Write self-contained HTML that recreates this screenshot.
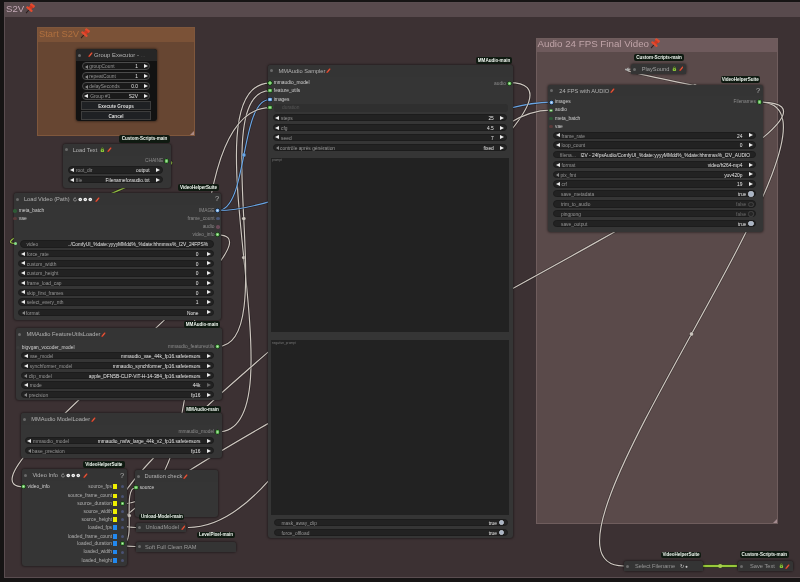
<!DOCTYPE html><html><head><meta charset="utf-8"><style>
*{margin:0;padding:0;box-sizing:border-box}
html,body{-webkit-font-smoothing:antialiased;width:800px;height:582px;overflow:hidden;background:#161414;font-family:"Liberation Sans", sans-serif;}
.a,.grp,.gt,.node,.tdot,.ttl,.badge,.wdg,.sdot{position:absolute}
.t{white-space:nowrap}
.ghdr{width:100%}
.gt{white-space:nowrap}
.ic{display:inline-block;vertical-align:middle;position:relative;top:-0.4px}
.node{border-radius:3px;box-shadow:0 0 2px 1px rgba(0,0,0,.35)}
.ntitle{border-radius:3px 3px 0 0}
.tdot{width:3px;height:3px;border-radius:50%;background:#6a6a6a}
.ttl{white-space:nowrap}
.badge{background:#0f1a11;color:#eef5ee;font-weight:bold;text-align:center;border-radius:2px;white-space:nowrap;letter-spacing:-0.05px}
.wdg{background:#222;border:0.8px solid #1c1c1c;border-radius:4px;font-size:4.85px;color:#969696;white-space:nowrap}
.wdg span{position:absolute;top:0}
.wdg i{position:absolute;width:0;height:0}
.tl{left:1.6px;border-top:2.6px solid transparent;border-bottom:2.6px solid transparent;border-right:4.3px solid #ececec}
.tl.d{left:2.3px;border-top-width:2px;border-bottom-width:2px;border-right:3.2px solid #8a8a8a}
.tr{right:1.8px;border-top:2.6px solid transparent;border-bottom:2.6px solid transparent;border-left:4.3px solid #ececec}
.wv{color:#e6e6e6}
.mk{right:7.5px;width:3px;height:3.2px;background:#3a3a3a;border-radius:0.8px}
.wv.off{color:#6a6a6a}
.tg{right:1.3px;width:5.4px;height:5.4px;border-radius:50%;background:#262626;border:0.6px solid #444}
.tg.on{background:#a9b4c4;border-color:#bcc4d0}
.sdot{border-radius:50%}
.ta{position:absolute;background:#222}
.btn{position:absolute;background:#1f2124;border:0.7px solid #3d3d3d;color:#ddd;font-size:4.65px;text-align:center;font-weight:bold}
</style></head><body><div id="root" style="position:absolute;left:0;top:0;width:800px;height:582px;overflow:hidden;will-change:transform"><div class="grp" style="left:4px;top:2px;width:830px;height:576px;background:#3c3133;border:1px solid #5a4d50;"><div class="ghdr" style="height:14px;background:#584a4d;"></div></div>
<svg class="a" style="left:829px;top:573px" width="4" height="4"><path d="M4 0 L4 4 L0 4 Z" fill="rgba(255,220,230,0.45)"/></svg>
<div class="gt" style="left:6px;top:2px;height:14px;line-height:13px;font-size:9.6px;color:#c4a9b6;">S2V<svg class="ic" style="margin-left:0.3px;width:11.5px;height:11.5px;top:-0.6px" viewBox="0 0 12 12"><g transform="rotate(40 6 6)"><line x1="6" y1="7" x2="6" y2="12" stroke="#2a1c1c" stroke-width="1"/><rect x="3.3" y="0.2" width="5.4" height="2.8" rx="0.9" fill="#e24a2e"/><rect x="4.1" y="2.4" width="3.8" height="3.8" fill="#cc3822"/><rect x="2.1" y="5.4" width="7.8" height="2.2" rx="0.7" fill="#e24a2e"/></g></svg></div>
<div class="grp" style="left:37px;top:27px;width:158px;height:109px;background:#674632;border:1px solid #7f573c;"><div class="ghdr" style="height:14px;background:#7b5237;"></div></div>
<svg class="a" style="left:190px;top:131px" width="4" height="4"><path d="M4 0 L4 4 L0 4 Z" fill="rgba(255,220,230,0.45)"/></svg>
<div class="gt" style="left:39px;top:27px;height:14px;line-height:13px;font-size:9.4px;color:#b0703f;">Start S2V<svg class="ic" style="margin-left:0.3px;width:11.5px;height:11.5px;top:-0.6px" viewBox="0 0 12 12"><g transform="rotate(40 6 6)"><line x1="6" y1="7" x2="6" y2="12" stroke="#2a1c1c" stroke-width="1"/><rect x="3.3" y="0.2" width="5.4" height="2.8" rx="0.9" fill="#e24a2e"/><rect x="4.1" y="2.4" width="3.8" height="3.8" fill="#cc3822"/><rect x="2.1" y="5.4" width="7.8" height="2.2" rx="0.7" fill="#e24a2e"/></g></svg></div>
<div class="grp" style="left:536px;top:37.5px;width:242px;height:486px;background:#5a4a4a;border:1px solid #6f5d5d;"><div class="ghdr" style="height:13.5px;background:#6e5a5c;"></div></div>
<svg class="a" style="left:773px;top:518.5px" width="4" height="4"><path d="M4 0 L4 4 L0 4 Z" fill="rgba(255,220,230,0.45)"/></svg>
<div class="gt" style="left:537.5px;top:37.5px;height:13.5px;line-height:12.5px;font-size:9.75px;color:#c0a4a8;">Audio 24 FPS Final Video<svg class="ic" style="margin-left:0.3px;width:11.5px;height:11.5px;top:-0.6px" viewBox="0 0 12 12"><g transform="rotate(40 6 6)"><line x1="6" y1="7" x2="6" y2="12" stroke="#2a1c1c" stroke-width="1"/><rect x="3.3" y="0.2" width="5.4" height="2.8" rx="0.9" fill="#e24a2e"/><rect x="4.1" y="2.4" width="3.8" height="3.8" fill="#cc3822"/><rect x="2.1" y="5.4" width="7.8" height="2.2" rx="0.7" fill="#e24a2e"/></g></svg></div>
<svg class="a" style="left:0;top:0" width="800" height="582">
<path d="M217.5 432.0 C305.7 432.0 181.8 83.1 270.0 83.1" stroke="rgba(0,0,0,0.35)" stroke-width="2.4" fill="none"/>
<path d="M217.5 432.0 C305.7 432.0 181.8 83.1 270.0 83.1" stroke="#cdc6bf" stroke-width="1.2" fill="none"/>
<circle cx="243.8" cy="257.6" r="1.9" fill="#cdc6bf" stroke="rgba(0,0,0,0.3)" stroke-width="0.5"/>
<path d="M217.5 346.5 C282.8 346.5 204.7 90.6 270.0 90.6" stroke="rgba(0,0,0,0.35)" stroke-width="2.4" fill="none"/>
<path d="M217.5 346.5 C282.8 346.5 204.7 90.6 270.0 90.6" stroke="#cdc6bf" stroke-width="1.2" fill="none"/>
<circle cx="243.8" cy="218.6" r="1.9" fill="#cdc6bf" stroke="rgba(0,0,0,0.3)" stroke-width="0.5"/>
<path d="M217.8 210.5 C248.5 210.5 239.3 99.5 270.0 99.5" stroke="rgba(0,0,0,0.35)" stroke-width="2.4" fill="none"/>
<path d="M217.8 210.5 C248.5 210.5 239.3 99.5 270.0 99.5" stroke="#6aa6e6" stroke-width="1.2" fill="none"/>
<circle cx="243.9" cy="155.0" r="1.9" fill="#6aa6e6" stroke="rgba(0,0,0,0.3)" stroke-width="0.5"/>
<path d="M217.8 210.5 C305.4 210.5 463.6 102.2 551.2 102.2" stroke="rgba(0,0,0,0.35)" stroke-width="2.4" fill="none"/>
<path d="M217.8 210.5 C305.4 210.5 463.6 102.2 551.2 102.2" stroke="#6aa6e6" stroke-width="1.2" fill="none"/>
<circle cx="384.5" cy="156.3" r="1.9" fill="#6aa6e6" stroke="rgba(0,0,0,0.3)" stroke-width="0.5"/>
<path d="M122.5 503.8 C228.2 503.8 164.3 107.7 270.0 107.7" stroke="rgba(0,0,0,0.35)" stroke-width="2.4" fill="none"/>
<path d="M122.5 503.8 C228.2 503.8 164.3 107.7 270.0 107.7" stroke="#cdc6bf" stroke-width="1.2" fill="none"/>
<circle cx="196.2" cy="305.8" r="1.9" fill="#cdc6bf" stroke="rgba(0,0,0,0.3)" stroke-width="0.5"/>
<path d="M509.1 82.7 C654.2 82.7 -9.1 527.5 136.0 527.5" stroke="rgba(0,0,0,0.35)" stroke-width="2.4" fill="none"/>
<path d="M509.1 82.7 C654.2 82.7 -9.1 527.5 136.0 527.5" stroke="#cdc6bf" stroke-width="1.2" fill="none"/>
<circle cx="322.6" cy="305.1" r="1.9" fill="#cdc6bf" stroke="rgba(0,0,0,0.3)" stroke-width="0.5"/>
<path d="M188.0 527.5 C326.3 527.5 412.6 110.2 550.9 110.2" stroke="rgba(0,0,0,0.35)" stroke-width="2.4" fill="none"/>
<path d="M188.0 527.5 C326.3 527.5 412.6 110.2 550.9 110.2" stroke="#cdc6bf" stroke-width="1.2" fill="none"/>
<circle cx="369.4" cy="318.9" r="1.9" fill="#cdc6bf" stroke="rgba(0,0,0,0.3)" stroke-width="0.5"/>
<path d="M759.2 102.0 C880.0 102.0 502.9 566.0 623.8 566.0" stroke="rgba(0,0,0,0.35)" stroke-width="2.4" fill="none"/>
<path d="M759.2 102.0 C880.0 102.0 502.9 566.0 623.8 566.0" stroke="#cdc6bf" stroke-width="1.2" fill="none"/>
<circle cx="691.5" cy="334.0" r="1.9" fill="#cdc6bf" stroke="rgba(0,0,0,0.3)" stroke-width="0.5"/>
<path d="M759.2 102.0 C792.4 102.0 597.4 69.2 630.6 69.2" stroke="rgba(0,0,0,0.35)" stroke-width="2.4" fill="none"/>
<path d="M759.2 102.0 C792.4 102.0 597.4 69.2 630.6 69.2" stroke="#cdc6bf" stroke-width="1.2" fill="none"/>
<circle cx="694.9" cy="85.6" r="1.9" fill="#cdc6bf" stroke="rgba(0,0,0,0.3)" stroke-width="0.5"/>
<path d="M759.2 102.0 C950.7 102.0 -56.0 546.5 135.5 546.5" stroke="rgba(0,0,0,0.35)" stroke-width="2.4" fill="none"/>
<path d="M759.2 102.0 C950.7 102.0 -56.0 546.5 135.5 546.5" stroke="#cdc6bf" stroke-width="1.2" fill="none"/>
<circle cx="447.4" cy="324.2" r="1.9" fill="#cdc6bf" stroke="rgba(0,0,0,0.3)" stroke-width="0.5"/>
<path d="M217.8 234.8 C297.3 234.8 -55.7 486.8 23.8 486.8" stroke="rgba(0,0,0,0.35)" stroke-width="2.4" fill="none"/>
<path d="M217.8 234.8 C297.3 234.8 -55.7 486.8 23.8 486.8" stroke="#cdc6bf" stroke-width="1.2" fill="none"/>
<circle cx="120.8" cy="360.8" r="1.9" fill="#cdc6bf" stroke="rgba(0,0,0,0.3)" stroke-width="0.5"/>
<path d="M166.5 161.0 C209.5 161.0 -27.3 243.6 15.7 243.6" stroke="rgba(0,0,0,0.35)" stroke-width="2.4" fill="none"/>
<path d="M166.5 161.0 C209.5 161.0 -27.3 243.6 15.7 243.6" stroke="#9ccc48" stroke-width="1.2" fill="none"/>
<circle cx="91.1" cy="202.3" r="1.9" fill="#9ccc48" stroke="rgba(0,0,0,0.3)" stroke-width="0.5"/>
<path d="M122.5 543.7 C136.9 543.7 121.5 487.5 135.9 487.5" stroke="rgba(0,0,0,0.35)" stroke-width="2.4" fill="none"/>
<path d="M122.5 543.7 C136.9 543.7 121.5 487.5 135.9 487.5" stroke="#cdc6bf" stroke-width="1.2" fill="none"/>
<circle cx="129.2" cy="515.6" r="1.9" fill="#cdc6bf" stroke="rgba(0,0,0,0.3)" stroke-width="0.5"/>
<path d="M702.5 566 L737 566" stroke="#2c4a12" stroke-width="3" fill="none"/>
<path d="M702.5 566 L737 566" stroke="#98c83a" stroke-width="1.8" fill="none"/>
<circle cx="720.2" cy="566" r="2.1" fill="#a8d050"/>
</svg>
<div class="node" style="left:75.5px;top:49px;width:81px;height:72px;background:#121212"><div class="ntitle" style="height:12px;background:#262626"></div></div>
<div class="tdot" style="left:77.8px;top:53.5px"></div>
<div class="ttl" style="left:94px;top:49px;height:12px;line-height:12.5px;font-size:5.9px;color:#b2b2b2">Group Executor - <span style="color:#555">...</span></div>
<div class="a" style="left:88.3px;top:52.2px;line-height:0"><svg class="ic" style="margin-left:0px;width:4.6px;height:5px" viewBox="0 0 10 11"><path d="M2.5 9.5 L8 2.5" stroke="#c93a26" stroke-width="3.6" stroke-linecap="round"/><path d="M4 7.5 L7.2 3.5" stroke="#f08a60" stroke-width="1.2" stroke-linecap="round"/></svg></div>
<div class="wdg" style="left:81.7px;top:62.199999999999996px;width:68.7px;height:8.2px;line-height:8.2px;border-color:#4a4a4a;background:#1a1a1a"><i class="tl d" style="top:1.8999999999999995px"></i><span class="wl" style="left:6.5px">groupCount</span><span class="wv" style="right:11.5px">1</span><i class="tr" style="top:1.2999999999999994px;"></i></div>
<div class="wdg" style="left:81.7px;top:71.80000000000001px;width:68.7px;height:8.2px;line-height:8.2px;border-color:#4a4a4a;background:#1a1a1a"><i class="tl d" style="top:1.8999999999999995px"></i><span class="wl" style="left:6.5px">repeatCount</span><span class="wv" style="right:11.5px">1</span><i class="tr" style="top:1.2999999999999994px;"></i></div>
<div class="wdg" style="left:81.7px;top:81.7px;width:68.7px;height:8.2px;line-height:8.2px;border-color:#4a4a4a;background:#1a1a1a"><i class="tl d" style="top:1.8999999999999995px"></i><span class="wl" style="left:6.5px">delaySeconds</span><span class="wv" style="right:11.5px">0.0</span><i class="tr" style="top:1.2999999999999994px;"></i></div>
<div class="wdg" style="left:81.7px;top:91.5px;width:68.7px;height:8.2px;line-height:8.2px;border-color:#4a4a4a;background:#1a1a1a"><i class="tl" style="top:1.2999999999999994px"></i><span class="wl" style="left:7.5px">Group #1</span><span class="wv" style="right:11.5px">S2V</span><i class="tr" style="top:1.2999999999999994px;"></i></div>
<div class="btn" style="left:81px;top:101.3px;width:70px;height:9px;line-height:9px">Execute Groups</div>
<div class="btn" style="left:81px;top:111px;width:70px;height:9.2px;line-height:9.2px">Cancel</div>
<div class="node" style="left:63px;top:143.5px;width:108px;height:44px;background:#353535"><div class="ntitle" style="height:12px;background:#343434"></div></div>
<div class="tdot" style="left:65.3px;top:148.0px"></div>
<div class="ttl" style="left:72.7px;top:143.5px;height:12px;line-height:12.5px;font-size:5.7px;color:#b2b2b2">Load Text<svg class="ic" style="margin-left:3px;width:4.8px;height:5.4px" viewBox="0 0 10 11"><path d="M3 5 V3.5 a2 2 0 0 1 4 0 V5" stroke="#6a9a20" stroke-width="1.5" fill="none"/><rect x="1.5" y="4.5" width="7" height="6" rx="1.5" fill="#8cc83a"/><rect x="4" y="6.5" width="2" height="2" fill="#3a5a10"/></svg><svg class="ic" style="margin-left:2px;width:4.6px;height:5px" viewBox="0 0 10 11"><path d="M2.5 9.5 L8 2.5" stroke="#c93a26" stroke-width="3.6" stroke-linecap="round"/><path d="M4 7.5 L7.2 3.5" stroke="#f08a60" stroke-width="1.2" stroke-linecap="round"/></svg></div>
<div class="sdot" style="left:163.79999999999998px;top:158.29999999999998px;width:5.4px;height:5.4px;background:radial-gradient(circle closest-side,#c8f0c0 0,#78c870 0.9900000000000001px,#4a9a40 1.8px,#1a3a18 2.1px,#1a3a18 2.6px,transparent 2.7px)"></div>
<div class="a t" style="right:636.8px;top:156.15px;height:9.7px;line-height:9.7px;font-size:4.85px;color:#8c8c8c;text-align:right;">CHAINE</div>
<div class="wdg" style="left:67.5px;top:166.3px;width:95.5px;height:7.4px;line-height:7.4px"><i class="tl" style="top:0.8999999999999999px"></i><span class="wl" style="left:7.5px">root_dir</span><span class="wv" style="right:12.5px">output</span><i class="tr" style="top:0.8999999999999999px;"></i></div>
<div class="wdg" style="left:67.5px;top:175.8px;width:95.5px;height:7.4px;line-height:7.4px"><i class="tl" style="top:0.8999999999999999px"></i><span class="wl" style="left:7.5px">file</span><span class="wv" style="right:12.5px">Filenameforaudio.txt</span><i class="tr" style="top:0.8999999999999999px;"></i></div>
<div class="badge" style="left:119px;top:134.5px;width:51px;height:8px;line-height:8.5px;font-size:4.6px">Custom-Scripts-main</div>
<div class="node" style="left:14px;top:193px;width:207px;height:127px;background:#353535"><div class="ntitle" style="height:12px;background:#343434"></div></div>
<div class="tdot" style="left:16.3px;top:197.5px"></div>
<div class="ttl" style="left:23.9px;top:193px;height:12px;line-height:12.5px;font-size:5.7px;color:#b2b2b2">Load Video (Path)<svg class="ic" style="margin-left:2.5px;width:21px;height:5px" viewBox="0 0 42 10"><path d="M6.5 2.2 A3 3 0 1 0 9 5" stroke="#ccc" stroke-width="1" fill="none"/><path d="M5.5 1 L7.5 2.2 L5.8 3.6" stroke="#ccc" stroke-width="0.8" fill="none"/><circle cx="16.5" cy="5" r="3.6" fill="#f0f0f0"/><circle cx="16.5" cy="5" r="1" fill="#888"/><circle cx="26.5" cy="5" r="3.6" fill="#f0f0f0"/><circle cx="26.5" cy="5" r="1" fill="#888"/><circle cx="36.5" cy="5" r="3.6" fill="#f0f0f0"/><circle cx="36.5" cy="5" r="1" fill="#888"/></svg><svg class="ic" style="margin-left:2px;width:4.6px;height:5px" viewBox="0 0 10 11"><path d="M2.5 9.5 L8 2.5" stroke="#c93a26" stroke-width="3.6" stroke-linecap="round"/><path d="M4 7.5 L7.2 3.5" stroke="#f08a60" stroke-width="1.2" stroke-linecap="round"/></svg></div>
<div class="a t" style="left:215px;top:191.0px;height:15.0px;line-height:15.0px;font-size:7.5px;color:#b4b4b4;">?</div>
<div class="sdot" style="left:13.2px;top:209.0px;width:3.6px;height:3.6px;background:#2d5a35;"></div>
<div class="a t" style="left:18.8px;top:205.95000000000002px;height:9.7px;line-height:9.7px;font-size:4.85px;color:#d0d0d0;">meta_batch</div>
<div class="sdot" style="left:13.2px;top:216.7px;width:3.6px;height:3.6px;background:#5a3a3a;"></div>
<div class="a t" style="left:18.8px;top:213.65px;height:9.7px;line-height:9.7px;font-size:4.85px;color:#d0d0d0;">vae</div>
<div class="sdot" style="left:215.1px;top:207.79999999999998px;width:5.4px;height:5.4px;background:radial-gradient(circle closest-side,#d8e8f8 0,#90bce8 0.9900000000000001px,#5a90d0 1.8px,#182a40 2.1px,#182a40 2.6px,transparent 2.7px)"></div>
<div class="a t" style="right:585.5px;top:205.65px;height:9.7px;line-height:9.7px;font-size:4.85px;color:#8c8c8c;text-align:right;">IMAGE</div>
<div class="sdot" style="left:216.0px;top:216.7px;width:3.6px;height:3.6px;background:#4a5878;"></div>
<div class="a t" style="right:585.5px;top:213.65px;height:9.7px;line-height:9.7px;font-size:4.85px;color:#8c8c8c;text-align:right;">frame_count</div>
<div class="sdot" style="left:216.0px;top:225.2px;width:3.6px;height:3.6px;background:#6a4a58;"></div>
<div class="a t" style="right:585.5px;top:222.15px;height:9.7px;line-height:9.7px;font-size:4.85px;color:#8c8c8c;text-align:right;">audio</div>
<div class="sdot" style="left:215.1px;top:232.1px;width:5.4px;height:5.4px;background:radial-gradient(circle closest-side,#c8f0c0 0,#78c870 0.9900000000000001px,#4a9a40 1.8px,#1a3a18 2.1px,#1a3a18 2.6px,transparent 2.7px)"></div>
<div class="a t" style="right:585.5px;top:229.95000000000002px;height:9.7px;line-height:9.7px;font-size:4.85px;color:#8c8c8c;text-align:right;">video_info</div>
<div class="wdg" style="left:19.5px;top:240.2px;width:194.5px;height:7.6px;line-height:7.6px"><span class="wl" style="left:6px">video</span><span class="wv" style="right:5px">../ComfyUI_%date:yyyyMMdd%_%date:hhmmss%_I2V_24FPS%</span></div>
<div class="sdot" style="left:13.899999999999999px;top:241.79999999999998px;width:3.6px;height:3.6px;background:#8d8;"></div>
<div class="wdg" style="left:18.3px;top:250.0px;width:195.7px;height:7.4px;line-height:7.4px"><i class="tl" style="top:0.8999999999999999px"></i><span class="wl" style="left:7.5px">force_rate</span><span class="wv" style="right:14.5px">0</span><i class="tr" style="top:0.8999999999999999px;"></i><i class="mk" style="top:1.4px"></i></div>
<div class="wdg" style="left:18.3px;top:259.6px;width:195.7px;height:7.4px;line-height:7.4px"><i class="tl" style="top:0.8999999999999999px"></i><span class="wl" style="left:7.5px">custom_width</span><span class="wv" style="right:14.5px">0</span><i class="tr" style="top:0.8999999999999999px;"></i><i class="mk" style="top:1.4px"></i></div>
<div class="wdg" style="left:18.3px;top:269.40000000000003px;width:195.7px;height:7.4px;line-height:7.4px"><i class="tl" style="top:0.8999999999999999px"></i><span class="wl" style="left:7.5px">custom_height</span><span class="wv" style="right:14.5px">0</span><i class="tr" style="top:0.8999999999999999px;"></i><i class="mk" style="top:1.4px"></i></div>
<div class="wdg" style="left:18.3px;top:278.8px;width:195.7px;height:7.4px;line-height:7.4px"><i class="tl" style="top:0.8999999999999999px"></i><span class="wl" style="left:7.5px">frame_load_cap</span><span class="wv" style="right:14.5px">0</span><i class="tr" style="top:0.8999999999999999px;"></i><i class="mk" style="top:1.4px"></i></div>
<div class="wdg" style="left:18.3px;top:288.6px;width:195.7px;height:7.4px;line-height:7.4px"><i class="tl" style="top:0.8999999999999999px"></i><span class="wl" style="left:7.5px">skip_first_frames</span><span class="wv" style="right:14.5px">0</span><i class="tr" style="top:0.8999999999999999px;"></i><i class="mk" style="top:1.4px"></i></div>
<div class="wdg" style="left:18.3px;top:298.40000000000003px;width:195.7px;height:7.4px;line-height:7.4px"><i class="tl" style="top:0.8999999999999999px"></i><span class="wl" style="left:7.5px">select_every_nth</span><span class="wv" style="right:14.5px">1</span><i class="tr" style="top:0.8999999999999999px;"></i><i class="mk" style="top:1.4px"></i></div>
<div class="wdg" style="left:18.3px;top:308.5px;width:195.7px;height:7.4px;line-height:7.4px"><i class="tl d" style="top:1.5px"></i><span class="wl" style="left:6.5px">format</span><span class="wv" style="right:14.5px">None</span><i class="tr" style="top:0.8999999999999999px;"></i></div>
<div class="badge" style="left:178px;top:184px;width:41px;height:7px;line-height:7.5px;font-size:4.6px">VideoHelperSuite</div>
<div class="node" style="left:15.5px;top:328.4px;width:206px;height:72px;background:#353535"><div class="ntitle" style="height:12px;background:#343434"></div></div>
<div class="tdot" style="left:17.8px;top:332.9px"></div>
<div class="ttl" style="left:26.5px;top:328.4px;height:12px;line-height:12.5px;font-size:5.7px;color:#b2b2b2">MMAudio FeatureUtilsLoader<svg class="ic" style="margin-left:1px;width:4.6px;height:5px" viewBox="0 0 10 11"><path d="M2.5 9.5 L8 2.5" stroke="#c93a26" stroke-width="3.6" stroke-linecap="round"/><path d="M4 7.5 L7.2 3.5" stroke="#f08a60" stroke-width="1.2" stroke-linecap="round"/></svg></div>
<div class="sdot" style="left:16.2px;top:345.8px;width:3.6px;height:3.6px;background:#3a3a3a;"></div>
<div class="a t" style="left:21.8px;top:342.75px;height:9.7px;line-height:9.7px;font-size:4.85px;color:#d0d0d0;">bigvgan_vocoder_model</div>
<div class="sdot" style="left:214.79999999999998px;top:343.8px;width:5.4px;height:5.4px;background:radial-gradient(circle closest-side,#c8f0c0 0,#78c870 0.9900000000000001px,#4a9a40 1.8px,#1a3a18 2.1px,#1a3a18 2.6px,transparent 2.7px)"></div>
<div class="a t" style="right:585.8px;top:341.65px;height:9.7px;line-height:9.7px;font-size:4.85px;color:#8c8c8c;text-align:right;">mmaudio_featureutils</div>
<div class="wdg" style="left:21.2px;top:352.1px;width:192.8px;height:7.4px;line-height:7.4px"><i class="tl" style="top:0.8999999999999999px"></i><span class="wl" style="left:7.5px">vae_model</span><span class="wv" style="right:12.5px">mmaudio_vae_44k_fp16.safetensors</span><i class="tr" style="top:0.8999999999999999px;"></i></div>
<div class="wdg" style="left:21.2px;top:361.7px;width:192.8px;height:7.4px;line-height:7.4px"><i class="tl" style="top:0.8999999999999999px"></i><span class="wl" style="left:7.5px">synchformer_model</span><span class="wv" style="right:12.5px">mmaudio_synchformer_fp16.safetensors</span><i class="tr" style="top:0.8999999999999999px;"></i></div>
<div class="wdg" style="left:21.2px;top:371.6px;width:192.8px;height:7.4px;line-height:7.4px"><i class="tl d" style="top:1.5px"></i><span class="wl" style="left:6.5px">clip_model</span><span class="wv" style="right:12.5px">apple_DFN5B-CLIP-ViT-H-14-384_fp16.safetensors</span><i class="tr" style="top:0.8999999999999999px;"></i></div>
<div class="wdg" style="left:21.2px;top:381.2px;width:192.8px;height:7.4px;line-height:7.4px"><i class="tl" style="top:0.8999999999999999px"></i><span class="wl" style="left:7.5px">mode</span><span class="wv" style="right:12.5px">44k</span><i class="tr" style="top:0.8999999999999999px;border-left-color:#666"></i></div>
<div class="wdg" style="left:21.2px;top:390.8px;width:192.8px;height:7.4px;line-height:7.4px"><i class="tl d" style="top:1.5px"></i><span class="wl" style="left:6.5px">precision</span><span class="wv" style="right:12.5px">fp16</span><i class="tr" style="top:0.8999999999999999px;"></i></div>
<div class="badge" style="left:184px;top:321px;width:36px;height:6.5px;line-height:7.0px;font-size:4.6px">MMAudio-main</div>
<div class="node" style="left:20.5px;top:413px;width:201.5px;height:45px;background:#353535"><div class="ntitle" style="height:12px;background:#343434"></div></div>
<div class="tdot" style="left:22.8px;top:417.5px"></div>
<div class="ttl" style="left:31.3px;top:413px;height:12px;line-height:12.5px;font-size:5.7px;color:#b2b2b2">MMAudio ModelLoader<svg class="ic" style="margin-left:1px;width:4.6px;height:5px" viewBox="0 0 10 11"><path d="M2.5 9.5 L8 2.5" stroke="#c93a26" stroke-width="3.6" stroke-linecap="round"/><path d="M4 7.5 L7.2 3.5" stroke="#f08a60" stroke-width="1.2" stroke-linecap="round"/></svg></div>
<div class="sdot" style="left:214.79999999999998px;top:429.3px;width:5.4px;height:5.4px;background:radial-gradient(circle closest-side,#c8f0c0 0,#78c870 0.9900000000000001px,#4a9a40 1.8px,#1a3a18 2.1px,#1a3a18 2.6px,transparent 2.7px)"></div>
<div class="a t" style="right:585.8px;top:427.15px;height:9.7px;line-height:9.7px;font-size:4.85px;color:#8c8c8c;text-align:right;">mmaudio_model</div>
<div class="wdg" style="left:24.6px;top:436.8px;width:189.4px;height:7.4px;line-height:7.4px"><i class="tl" style="top:0.8999999999999999px"></i><span class="wl" style="left:7.5px">mmaudio_model</span><span class="wv" style="right:12.5px">mmaudio_nsfw_large_44k_v2_fp16.safetensors</span><i class="tr" style="top:0.8999999999999999px;"></i></div>
<div class="wdg" style="left:24.6px;top:446.7px;width:189.4px;height:7.4px;line-height:7.4px"><i class="tl d" style="top:1.5px"></i><span class="wl" style="left:6.5px">base_precision</span><span class="wv" style="right:12.5px">fp16</span><i class="tr" style="top:0.8999999999999999px;"></i></div>
<div class="badge" style="left:184.5px;top:406px;width:36px;height:6.5px;line-height:7.0px;font-size:4.6px">MMAudio-main</div>
<div class="node" style="left:21.8px;top:469px;width:105px;height:97px;background:#353535"><div class="ntitle" style="height:12px;background:#343434"></div></div>
<div class="tdot" style="left:24.1px;top:473.5px"></div>
<div class="ttl" style="left:32.4px;top:469px;height:12px;line-height:12.5px;font-size:5.7px;color:#b2b2b2">Video Info<svg class="ic" style="margin-left:2.5px;width:21px;height:5px" viewBox="0 0 42 10"><path d="M6.5 2.2 A3 3 0 1 0 9 5" stroke="#ccc" stroke-width="1" fill="none"/><path d="M5.5 1 L7.5 2.2 L5.8 3.6" stroke="#ccc" stroke-width="0.8" fill="none"/><circle cx="16.5" cy="5" r="3.6" fill="#f0f0f0"/><circle cx="16.5" cy="5" r="1" fill="#888"/><circle cx="26.5" cy="5" r="3.6" fill="#f0f0f0"/><circle cx="26.5" cy="5" r="1" fill="#888"/><circle cx="36.5" cy="5" r="3.6" fill="#f0f0f0"/><circle cx="36.5" cy="5" r="1" fill="#888"/></svg><svg class="ic" style="margin-left:1.5px;width:4.6px;height:5px" viewBox="0 0 10 11"><path d="M2.5 9.5 L8 2.5" stroke="#c93a26" stroke-width="3.6" stroke-linecap="round"/><path d="M4 7.5 L7.2 3.5" stroke="#f08a60" stroke-width="1.2" stroke-linecap="round"/></svg></div>
<div class="a t" style="left:120px;top:467.9px;height:15.0px;line-height:15.0px;font-size:7.5px;color:#b4b4b4;">?</div>
<div class="sdot" style="left:21.1px;top:484.1px;width:5.4px;height:5.4px;background:radial-gradient(circle closest-side,#c8f0c0 0,#78c870 0.9900000000000001px,#4a9a40 1.8px,#1a3a18 2.1px,#1a3a18 2.6px,transparent 2.7px)"></div>
<div class="a t" style="left:27.6px;top:481.95px;height:9.7px;line-height:9.7px;font-size:4.85px;color:#d0d0d0;">video_info</div>
<div class="a" style="left:112.8px;top:484.40000000000003px;width:4.6px;height:4.8px;background:#ee0"></div>
<div class="a t" style="right:688px;top:481.95px;height:9.7px;line-height:9.7px;font-size:4.85px;color:#b0b0b0;text-align:right;">source_fps</div>
<div class="sdot" style="left:121.0px;top:485.3px;width:3.0px;height:3.0px;background:#4a5274;"></div>
<div class="a" style="left:112.8px;top:493.6px;width:4.6px;height:4.8px;background:#ee0"></div>
<div class="a t" style="right:688px;top:491.15px;height:9.7px;line-height:9.7px;font-size:4.85px;color:#b0b0b0;text-align:right;">source_frame_count</div>
<div class="sdot" style="left:121.0px;top:494.5px;width:3.0px;height:3.0px;background:#4a5274;"></div>
<div class="a" style="left:112.8px;top:501.40000000000003px;width:4.6px;height:4.8px;background:#ee0"></div>
<div class="a t" style="right:688px;top:498.95px;height:9.7px;line-height:9.7px;font-size:4.85px;color:#b0b0b0;text-align:right;">source_duration</div>
<div class="sdot" style="left:120.1px;top:501.40000000000003px;width:4.8px;height:4.8px;background:radial-gradient(circle closest-side,#c8f0c0 0,#78c870 0.8250000000000001px,#4a9a40 1.5px,#1a3a18 1.8px,#1a3a18 2.3px,transparent 2.4px)"></div>
<div class="a" style="left:112.8px;top:509.3px;width:4.6px;height:4.8px;background:#ee0"></div>
<div class="a t" style="right:688px;top:506.84999999999997px;height:9.7px;line-height:9.7px;font-size:4.85px;color:#b0b0b0;text-align:right;">source_width</div>
<div class="sdot" style="left:121.0px;top:510.2px;width:3.0px;height:3.0px;background:#4a5274;"></div>
<div class="a" style="left:112.8px;top:517.3000000000001px;width:4.6px;height:4.8px;background:#ee0"></div>
<div class="a t" style="right:688px;top:514.85px;height:9.7px;line-height:9.7px;font-size:4.85px;color:#b0b0b0;text-align:right;">source_height</div>
<div class="sdot" style="left:121.0px;top:518.2px;width:3.0px;height:3.0px;background:#4a5274;"></div>
<div class="a" style="left:112.8px;top:525.4px;width:4.6px;height:4.8px;background:#28e"></div>
<div class="a t" style="right:688px;top:522.9499999999999px;height:9.7px;line-height:9.7px;font-size:4.85px;color:#b0b0b0;text-align:right;">loaded_fps</div>
<div class="sdot" style="left:121.0px;top:526.3px;width:3.0px;height:3.0px;background:#4a5274;"></div>
<div class="a" style="left:112.8px;top:534.1px;width:4.6px;height:4.8px;background:#28e"></div>
<div class="a t" style="right:688px;top:531.65px;height:9.7px;line-height:9.7px;font-size:4.85px;color:#b0b0b0;text-align:right;">loaded_frame_count</div>
<div class="sdot" style="left:121.0px;top:535.0px;width:3.0px;height:3.0px;background:#4a5274;"></div>
<div class="a" style="left:112.8px;top:541.3000000000001px;width:4.6px;height:4.8px;background:#28e"></div>
<div class="a t" style="right:688px;top:538.85px;height:9.7px;line-height:9.7px;font-size:4.85px;color:#b0b0b0;text-align:right;">loaded_duration</div>
<div class="sdot" style="left:120.1px;top:541.3000000000001px;width:4.8px;height:4.8px;background:radial-gradient(circle closest-side,#c8f0c0 0,#78c870 0.8250000000000001px,#4a9a40 1.5px,#1a3a18 1.8px,#1a3a18 2.3px,transparent 2.4px)"></div>
<div class="a" style="left:112.8px;top:549.6px;width:4.6px;height:4.8px;background:#28e"></div>
<div class="a t" style="right:688px;top:547.15px;height:9.7px;line-height:9.7px;font-size:4.85px;color:#b0b0b0;text-align:right;">loaded_width</div>
<div class="sdot" style="left:121.0px;top:550.5px;width:3.0px;height:3.0px;background:#4a5274;"></div>
<div class="a" style="left:112.8px;top:558.1px;width:4.6px;height:4.8px;background:#28e"></div>
<div class="a t" style="right:688px;top:555.65px;height:9.7px;line-height:9.7px;font-size:4.85px;color:#b0b0b0;text-align:right;">loaded_height</div>
<div class="sdot" style="left:121.0px;top:559.0px;width:3.0px;height:3.0px;background:#4a5274;"></div>
<div class="badge" style="left:82.8px;top:461px;width:42px;height:6.7px;line-height:7.2px;font-size:4.6px">VideoHelperSuite</div>
<div class="node" style="left:134.5px;top:470px;width:83px;height:47px;background:#353535"><div class="ntitle" style="height:12px;background:#343434"></div></div>
<div class="tdot" style="left:136.8px;top:474.5px"></div>
<div class="ttl" style="left:144.4px;top:470px;height:12px;line-height:12.5px;font-size:5.7px;color:#b2b2b2">Duration check<svg class="ic" style="margin-left:1px;width:4.6px;height:5px" viewBox="0 0 10 11"><path d="M2.5 9.5 L8 2.5" stroke="#c93a26" stroke-width="3.6" stroke-linecap="round"/><path d="M4 7.5 L7.2 3.5" stroke="#f08a60" stroke-width="1.2" stroke-linecap="round"/></svg></div>
<div class="sdot" style="left:133.2px;top:484.8px;width:5.4px;height:5.4px;background:radial-gradient(circle closest-side,#c8f0c0 0,#78c870 0.9900000000000001px,#4a9a40 1.8px,#1a3a18 2.1px,#1a3a18 2.6px,transparent 2.7px)"></div>
<div class="a t" style="left:139.70000000000002px;top:482.65px;height:9.7px;line-height:9.7px;font-size:4.85px;color:#d0d0d0;">source</div>
<div class="node" style="left:136px;top:523px;width:50px;height:9px;background:#353535"><div class="ntitle" style="height:9px;background:#343434"></div></div>
<div class="tdot" style="left:138.3px;top:526.0px"></div>
<div class="ttl" style="left:145.5px;top:523px;height:9px;line-height:9.5px;font-size:5.7px;color:#9a9a9a">UnloadModel<svg class="ic" style="margin-left:1.5px;width:4.6px;height:5px" viewBox="0 0 10 11"><path d="M2.5 9.5 L8 2.5" stroke="#c93a26" stroke-width="3.6" stroke-linecap="round"/><path d="M4 7.5 L7.2 3.5" stroke="#f08a60" stroke-width="1.2" stroke-linecap="round"/></svg></div>
<div class="badge" style="left:139.3px;top:514px;width:45px;height:6.2px;line-height:6.7px;font-size:4.6px">Unload-Model-main</div>
<div class="node" style="left:135.5px;top:541.5px;width:100px;height:10px;background:#353535"><div class="ntitle" style="height:10px;background:#343434"></div></div>
<div class="tdot" style="left:137.8px;top:545.0px"></div>
<div class="ttl" style="left:145px;top:541.5px;height:10px;line-height:10.5px;font-size:5.7px;color:#9a9a9a">Soft Full Clean RAM</div>
<div class="badge" style="left:197.3px;top:532px;width:37.4px;height:6px;line-height:6.5px;font-size:4.6px">LevelPixel-main</div>
<div class="node" style="left:268px;top:64.5px;width:244.5px;height:473px;background:#353535"><div class="ntitle" style="height:12px;background:#343434"></div></div>
<div class="tdot" style="left:270.3px;top:69.0px"></div>
<div class="ttl" style="left:278.6px;top:64.5px;height:12px;line-height:12.5px;font-size:5.7px;color:#b2b2b2">MMAudio Sampler<svg class="ic" style="margin-left:1px;width:4.6px;height:5px" viewBox="0 0 10 11"><path d="M2.5 9.5 L8 2.5" stroke="#c93a26" stroke-width="3.6" stroke-linecap="round"/><path d="M4 7.5 L7.2 3.5" stroke="#f08a60" stroke-width="1.2" stroke-linecap="round"/></svg></div>
<div class="sdot" style="left:267.3px;top:80.39999999999999px;width:5.4px;height:5.4px;background:radial-gradient(circle closest-side,#c8f0c0 0,#78c870 0.9900000000000001px,#4a9a40 1.8px,#1a3a18 2.1px,#1a3a18 2.6px,transparent 2.7px)"></div>
<div class="a t" style="left:273.8px;top:78.25px;height:9.7px;line-height:9.7px;font-size:4.85px;color:#d0d0d0;">mmaudio_model</div>
<div class="sdot" style="left:267.3px;top:87.89999999999999px;width:5.4px;height:5.4px;background:radial-gradient(circle closest-side,#c8f0c0 0,#78c870 0.9900000000000001px,#4a9a40 1.8px,#1a3a18 2.1px,#1a3a18 2.6px,transparent 2.7px)"></div>
<div class="a t" style="left:273.8px;top:85.75px;height:9.7px;line-height:9.7px;font-size:4.85px;color:#d0d0d0;">feature_utils</div>
<div class="sdot" style="left:267.3px;top:96.8px;width:5.4px;height:5.4px;background:radial-gradient(circle closest-side,#d8e8f8 0,#90bce8 0.9900000000000001px,#5a90d0 1.8px,#182a40 2.1px,#182a40 2.6px,transparent 2.7px)"></div>
<div class="a t" style="left:273.8px;top:94.65px;height:9.7px;line-height:9.7px;font-size:4.85px;color:#d0d0d0;">images</div>
<div class="sdot" style="left:267.3px;top:105.0px;width:5.4px;height:5.4px;background:radial-gradient(circle closest-side,#c8f0c0 0,#78c870 0.9900000000000001px,#4a9a40 1.8px,#1a3a18 2.1px,#1a3a18 2.6px,transparent 2.7px)"></div>
<div class="a" style="left:274px;top:104px;width:234px;height:7.5px;background:#2f2f2f;border-radius:3px"></div>
<div class="a t" style="left:282px;top:102.85000000000001px;height:9.7px;line-height:9.7px;font-size:4.85px;color:#555;">duration</div>
<div class="sdot" style="left:506.5px;top:80.89999999999999px;width:5.4px;height:5.4px;background:radial-gradient(circle closest-side,#c8f0c0 0,#78c870 0.9900000000000001px,#4a9a40 1.8px,#1a3a18 2.1px,#1a3a18 2.6px,transparent 2.7px)"></div>
<div class="a t" style="right:294.1px;top:78.75px;height:9.7px;line-height:9.7px;font-size:4.85px;color:#8c8c8c;text-align:right;">audio</div>
<div class="wdg" style="left:272.6px;top:113.8px;width:234.7px;height:7.4px;line-height:7.4px"><i class="tl" style="top:0.8999999999999999px"></i><span class="wl" style="left:7.5px">steps</span><span class="wv" style="right:12.5px">25</span><i class="tr" style="top:0.8999999999999999px;"></i></div>
<div class="wdg" style="left:272.6px;top:123.8px;width:234.7px;height:7.4px;line-height:7.4px"><i class="tl" style="top:0.8999999999999999px"></i><span class="wl" style="left:7.5px">cfg</span><span class="wv" style="right:12.5px">4.5</span><i class="tr" style="top:0.8999999999999999px;"></i></div>
<div class="wdg" style="left:272.6px;top:133.60000000000002px;width:234.7px;height:7.4px;line-height:7.4px"><i class="tl" style="top:0.8999999999999999px"></i><span class="wl" style="left:7.5px">seed</span><span class="wv" style="right:12.5px">7</span><i class="tr" style="top:0.8999999999999999px;"></i></div>
<div class="wdg" style="left:272.6px;top:143.70000000000002px;width:234.7px;height:7.4px;line-height:7.4px"><i class="tl d" style="top:1.5px"></i><span class="wl" style="left:6.5px">contr&ocirc;le apr&egrave;s g&eacute;n&eacute;ration</span><span class="wv" style="right:12.5px">fixed</span><i class="tr" style="top:0.8999999999999999px;"></i></div>
<div class="ta" style="left:271px;top:157.5px;width:237.5px;height:174px"></div>
<div class="a t" style="left:272px;top:156.8px;height:6.4px;line-height:6.4px;font-size:3.2px;color:#777;">prompt</div>
<div class="ta" style="left:271px;top:340px;width:237.5px;height:174.7px"></div>
<div class="a t" style="left:272px;top:339.8px;height:6.4px;line-height:6.4px;font-size:3.2px;color:#777;">negative_prompt</div>
<div class="wdg" style="left:273.5px;top:519.2px;width:234px;height:7px;line-height:7px"><span class="wl" style="left:7px">mask_away_clip</span><span class="wv" style="right:9.5px">true</span><span class="tg on" style="top:0.30000000000000004px;width:5.0px;height:5.0px;right:2.6px"></span></div>
<div class="wdg" style="left:273.5px;top:529.1px;width:234px;height:7px;line-height:7px"><span class="wl" style="left:7px">force_offload</span><span class="wv" style="right:9.5px">true</span><span class="tg on" style="top:0.30000000000000004px;width:5.0px;height:5.0px;right:2.6px"></span></div>
<div class="badge" style="left:476px;top:57px;width:36px;height:7px;line-height:7.5px;font-size:4.6px">MMAudio-main</div>
<div class="node" style="left:630.6px;top:63.75px;width:55.4px;height:10.6px;background:#353535"><div class="ntitle" style="height:10.6px;background:#343434"></div></div>
<div class="tdot" style="left:632.9px;top:67.55px"></div>
<div class="ttl" style="left:641.8px;top:63.75px;height:10.6px;line-height:11.1px;font-size:5.7px;color:#a0a0a0">PlaySound<svg class="ic" style="margin-left:2.5px;width:4.8px;height:5.4px" viewBox="0 0 10 11"><path d="M3 5 V3.5 a2 2 0 0 1 4 0 V5" stroke="#6a9a20" stroke-width="1.5" fill="none"/><rect x="1.5" y="4.5" width="7" height="6" rx="1.5" fill="#8cc83a"/><rect x="4" y="6.5" width="2" height="2" fill="#3a5a10"/></svg><svg class="ic" style="margin-left:2px;width:4.6px;height:5px" viewBox="0 0 10 11"><path d="M2.5 9.5 L8 2.5" stroke="#c93a26" stroke-width="3.6" stroke-linecap="round"/><path d="M4 7.5 L7.2 3.5" stroke="#f08a60" stroke-width="1.2" stroke-linecap="round"/></svg></div>
<svg class="a" style="left:624.5px;top:66.8px" width="5.5" height="5" viewBox="0 0 11 10"><path d="M0 3.5 H3 L7 0.5 V9.5 L3 6.5 H0 Z" fill="#aaa"/><path d="M8.5 3 Q10 5 8.5 7" stroke="#aaa" stroke-width="1" fill="none"/></svg>
<div class="badge" style="left:634.4px;top:54.4px;width:49.4px;height:6.9px;line-height:7.4px;font-size:4.6px">Custom-Scripts-main</div>
<div class="node" style="left:548px;top:84.5px;width:215px;height:147px;background:#353535"><div class="ntitle" style="height:11.5px;background:#343434"></div></div>
<div class="tdot" style="left:550.3px;top:88.75px"></div>
<div class="ttl" style="left:559.3px;top:84.5px;height:11.5px;line-height:12.0px;font-size:5.7px;color:#b2b2b2">24 FPS with AUDIO<svg class="ic" style="margin-left:1px;width:4.6px;height:5px" viewBox="0 0 10 11"><path d="M2.5 9.5 L8 2.5" stroke="#c93a26" stroke-width="3.6" stroke-linecap="round"/><path d="M4 7.5 L7.2 3.5" stroke="#f08a60" stroke-width="1.2" stroke-linecap="round"/></svg></div>
<div class="a t" style="left:756px;top:83.1px;height:15.0px;line-height:15.0px;font-size:7.5px;color:#b4b4b4;">?</div>
<div class="sdot" style="left:548.5000000000001px;top:99.5px;width:5.4px;height:5.4px;background:radial-gradient(circle closest-side,#d8e8f8 0,#90bce8 0.9900000000000001px,#5a90d0 1.8px,#182a40 2.1px,#182a40 2.6px,transparent 2.7px)"></div>
<div class="a t" style="left:555.0px;top:97.35000000000001px;height:9.7px;line-height:9.7px;font-size:4.85px;color:#d0d0d0;">images</div>
<div class="sdot" style="left:549.4000000000001px;top:108.5px;width:3.6px;height:3.6px;background:#b8e0b0;border:1px solid #4a9a40;"></div>
<div class="a t" style="left:555.0px;top:105.45px;height:9.7px;line-height:9.7px;font-size:4.85px;color:#d0d0d0;">audio</div>
<div class="sdot" style="left:549.4000000000001px;top:116.60000000000001px;width:3.6px;height:3.6px;background:#2d5a35;"></div>
<div class="a t" style="left:555.0px;top:113.55000000000001px;height:9.7px;line-height:9.7px;font-size:4.85px;color:#d0d0d0;">meta_batch</div>
<div class="sdot" style="left:549.4000000000001px;top:124.60000000000001px;width:3.6px;height:3.6px;background:#5a3a3a;"></div>
<div class="a t" style="left:555.0px;top:121.55000000000001px;height:9.7px;line-height:9.7px;font-size:4.85px;color:#d0d0d0;">vae</div>
<div class="sdot" style="left:756.5000000000001px;top:99.3px;width:5.4px;height:5.4px;background:radial-gradient(circle closest-side,#c8f0c0 0,#78c870 0.9900000000000001px,#4a9a40 1.8px,#1a3a18 2.1px,#1a3a18 2.6px,transparent 2.7px)"></div>
<div class="a t" style="right:44.09999999999991px;top:97.15px;height:9.7px;line-height:9.7px;font-size:4.85px;color:#8c8c8c;text-align:right;">Filenames</div>
<div class="wdg" style="left:553px;top:131.5px;width:203px;height:7.4px;line-height:7.4px"><i class="tl" style="top:0.8999999999999999px"></i><span class="wl" style="left:7.5px">frame_rate</span><span class="wv" style="right:12.5px">24</span><i class="tr" style="top:0.8999999999999999px;"></i></div>
<div class="wdg" style="left:553px;top:141.3px;width:203px;height:7.4px;line-height:7.4px"><i class="tl" style="top:0.8999999999999999px"></i><span class="wl" style="left:7.5px">loop_count</span><span class="wv" style="right:12.5px">0</span><i class="tr" style="top:0.8999999999999999px;"></i></div>
<div class="wdg" style="left:553px;top:151.0px;width:203px;height:7.4px;line-height:7.4px"><span class="wl" style="left:6px">filena&hellip;</span><span class="wv" style="right:5px">I2V - 24fpsAudio/ComfyUI_%date:yyyyMMdd%_%date:hhmmss%_I2V_AUDIO</span></div>
<div class="wdg" style="left:553px;top:160.8px;width:203px;height:7.4px;line-height:7.4px"><i class="tl" style="top:0.8999999999999999px"></i><span class="wl" style="left:7.5px">format</span><span class="wv" style="right:12.5px">video/h264-mp4</span><i class="tr" style="top:0.8999999999999999px;"></i></div>
<div class="wdg" style="left:553px;top:170.60000000000002px;width:203px;height:7.4px;line-height:7.4px"><i class="tl d" style="top:1.5px"></i><span class="wl" style="left:6.5px">pix_fmt</span><span class="wv" style="right:12.5px">yuv420p</span><i class="tr" style="top:0.8999999999999999px;"></i></div>
<div class="wdg" style="left:553px;top:180.3px;width:203px;height:7.4px;line-height:7.4px"><i class="tl" style="top:0.8999999999999999px"></i><span class="wl" style="left:7.5px">crf</span><span class="wv" style="right:12.5px">19</span><i class="tr" style="top:0.8999999999999999px;"></i></div>
<div class="wdg" style="left:553px;top:190.10000000000002px;width:203px;height:7.4px;line-height:7.4px"><span class="wl" style="left:7px">save_metadata</span><span class="wv" style="right:8.7px">true</span><span class="tg on" style="top:0.40000000000000013px;width:5.2px;height:5.2px;right:1.4px"></span></div>
<div class="wdg" style="left:553px;top:200.20000000000002px;width:203px;height:7.4px;line-height:7.4px"><span class="wl" style="left:7px">trim_to_audio</span><span class="wv off" style="right:8.7px">false</span><span class="tg" style="top:0.40000000000000013px;width:5.2px;height:5.2px;right:1.4px"></span></div>
<div class="wdg" style="left:553px;top:210.0px;width:203px;height:7.4px;line-height:7.4px"><span class="wl" style="left:7px">pingpong</span><span class="wv off" style="right:8.7px">false</span><span class="tg" style="top:0.40000000000000013px;width:5.2px;height:5.2px;right:1.4px"></span></div>
<div class="wdg" style="left:553px;top:219.70000000000002px;width:203px;height:7.4px;line-height:7.4px"><span class="wl" style="left:7px">save_output</span><span class="wv" style="right:8.7px">true</span><span class="tg on" style="top:0.40000000000000013px;width:5.2px;height:5.2px;right:1.4px"></span></div>
<div class="badge" style="left:720.5px;top:76.3px;width:39.5px;height:6.7px;line-height:7.2px;font-size:4.6px">VideoHelperSuite</div>
<div class="node" style="left:623.75px;top:561px;width:79px;height:10px;background:#353535"><div class="ntitle" style="height:10px;background:#343434"></div></div>
<div class="tdot" style="left:626.05px;top:564.5px"></div>
<div class="ttl" style="left:635px;top:561px;height:10px;line-height:10.5px;font-size:5.6px;color:#999">Select Filename</div>
<div class="a t" style="left:680px;top:561.5px;height:9.0px;line-height:9.0px;font-size:4.5px;color:#ccc;">&#8635; &#9679;</div>
<div class="badge" style="left:661px;top:552px;width:40px;height:6px;line-height:6.5px;font-size:4.6px">VideoHelperSuite</div>
<div class="node" style="left:737.5px;top:561px;width:55px;height:10px;background:#353535"><div class="ntitle" style="height:10px;background:#343434"></div></div>
<div class="tdot" style="left:739.8px;top:564.5px"></div>
<div class="ttl" style="left:750px;top:561px;height:10px;line-height:10.5px;font-size:5.7px;color:#999">Save Text<svg class="ic" style="margin-left:4px;width:4.8px;height:5.4px" viewBox="0 0 10 11"><path d="M3 5 V3.5 a2 2 0 0 1 4 0 V5" stroke="#6a9a20" stroke-width="1.5" fill="none"/><rect x="1.5" y="4.5" width="7" height="6" rx="1.5" fill="#8cc83a"/><rect x="4" y="6.5" width="2" height="2" fill="#3a5a10"/></svg><svg class="ic" style="margin-left:1.5px;width:4.6px;height:5px" viewBox="0 0 10 11"><path d="M2.5 9.5 L8 2.5" stroke="#c93a26" stroke-width="3.6" stroke-linecap="round"/><path d="M4 7.5 L7.2 3.5" stroke="#f08a60" stroke-width="1.2" stroke-linecap="round"/></svg></div>
<div class="badge" style="left:740px;top:551px;width:48.75px;height:7px;line-height:7.5px;font-size:4.6px">Custom-Scripts-main</div></div></body></html>
